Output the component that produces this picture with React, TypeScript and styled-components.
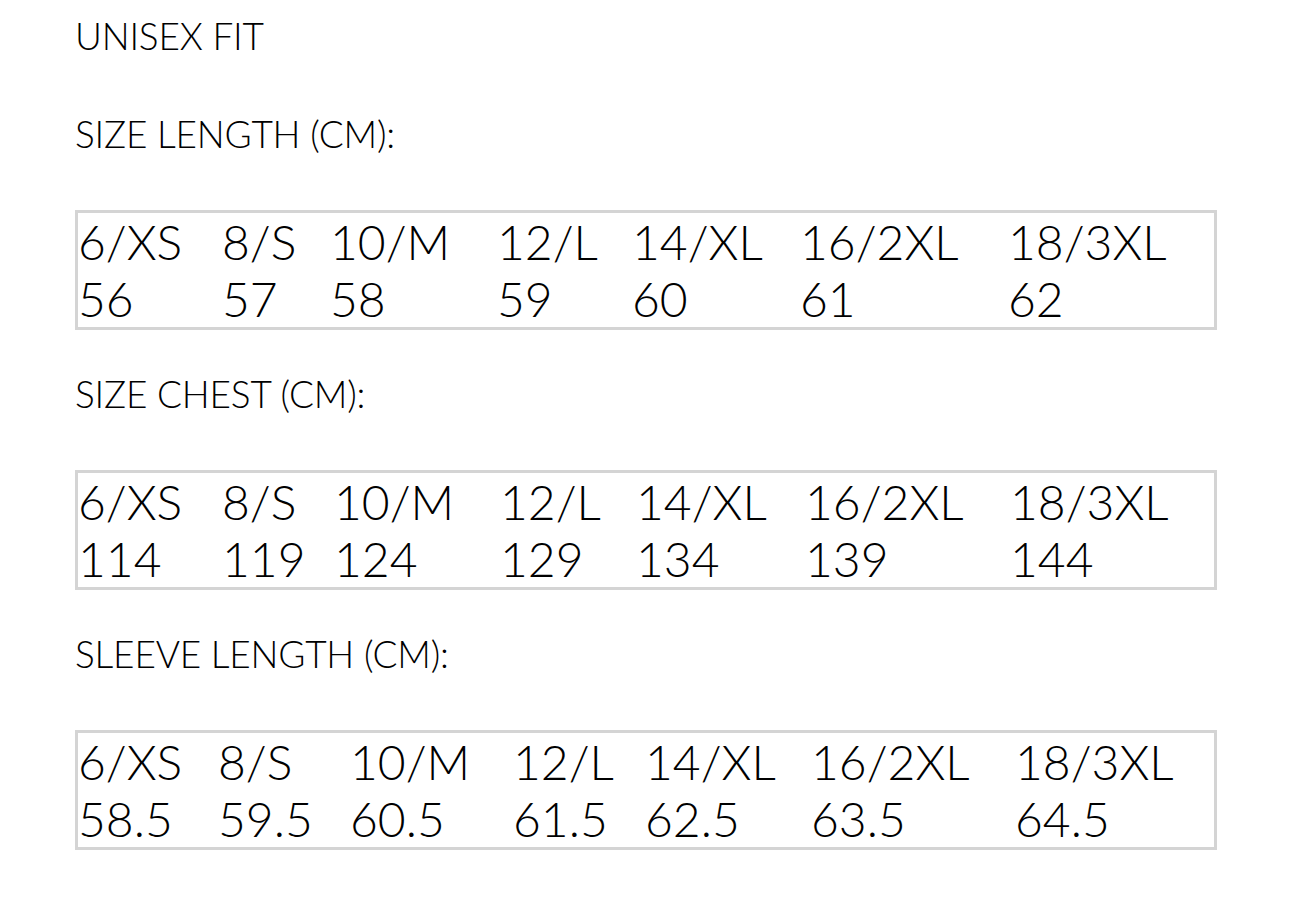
import React from "react";
import styled, { createGlobalStyle } from "styled-components";

const GlobalStyle = createGlobalStyle`
  html, body {
    margin: 0;
    padding: 0;
    background: #ffffff;
  }
  body {
    font-family: Lato, "Liberation Sans", sans-serif;
    color: #000000;
  }
`;

type Chart = {
  title: string;
  cols: number[];
  values: string[];
};

const SIZES = ["6/XS", "8/S", "10/M", "12/L", "14/XL", "16/2XL", "18/3XL"];

const CHARTS: Chart[] = [
  {
    title: "SIZE LENGTH (CM):",
    cols: [144, 108, 167, 135, 168, 208, 206],
    values: ["56", "57", "58", "59", "60", "61", "62"],
  },
  {
    title: "SIZE CHEST (CM):",
    cols: [144, 112, 166, 136, 169, 205, 204],
    values: ["114", "119", "124", "129", "134", "139", "144"],
  },
  {
    title: "SLEEVE LENGTH (CM):",
    cols: [140, 132, 163, 132, 166, 204, 199],
    values: ["58.5", "59.5", "60.5", "61.5", "62.5", "63.5", "64.5"],
  },
];

const Page = styled.main`
  padding: 14px 0 40px 75px;
`;

const Heading = styled.p`
  margin: 0;
  font-size: 37px;
  font-weight: 300;
  line-height: 44px;
  letter-spacing: -0.2px;
`;

const FitHeading = styled(Heading)`
  margin-bottom: 54px;
`;

const Section = styled.section`
  margin-bottom: 42px;
`;

const SectionTitle = styled(Heading)`
  margin-bottom: 54px;
`;

const Table = styled.table`
  width: 1142px;
  table-layout: fixed;
  border-collapse: separate;
  border-spacing: 0;
  border: 3px solid #d4d4d4;
`;

const Cell = styled.td`
  padding: 0;
  font-size: 48px;
  font-weight: 300;
  line-height: 57px;
  white-space: nowrap;
  vertical-align: middle;
`;

const SizeChart = ({ chart }: { chart: Chart }) => (
  <Section>
    <SectionTitle>{chart.title}</SectionTitle>
    <Table>
      <colgroup>
        {chart.cols.map((w, i) => (
          <col key={i} style={{ width: w }} />
        ))}
      </colgroup>
      <tbody>
        <tr>
          {SIZES.map((s) => (
            <Cell key={s}>{s}</Cell>
          ))}
        </tr>
        <tr>
          {chart.values.map((v, i) => (
            <Cell key={i}>{v}</Cell>
          ))}
        </tr>
      </tbody>
    </Table>
  </Section>
);

export default function App() {
  return (
    <>
      <GlobalStyle />
      <Page>
        <FitHeading>UNISEX FIT</FitHeading>
        {CHARTS.map((c) => (
          <SizeChart key={c.title} chart={c} />
        ))}
      </Page>
    </>
  );
}
